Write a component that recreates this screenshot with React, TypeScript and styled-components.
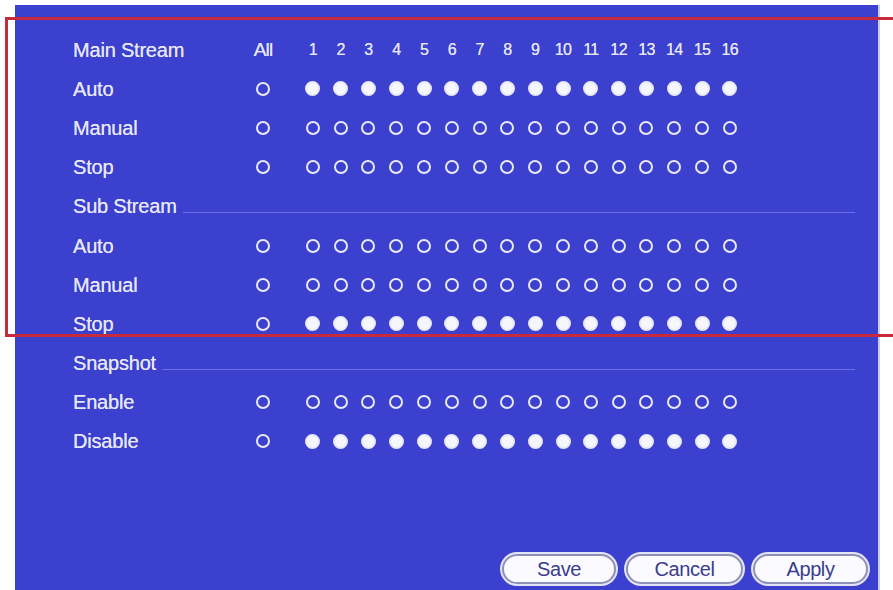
import React from 'react';
import styled, { createGlobalStyle } from 'styled-components';

const Global = createGlobalStyle`
  html,body{margin:0;padding:0;background:#fff}
  body{font-family:"Liberation Sans",Arial,sans-serif}
`;

const Frame = styled.div`position:relative;width:893px;height:590px;overflow:hidden;background:#fff`;
const Panel = styled.div`margin:5px 0 0 15px;width:865px;height:585px;box-sizing:border-box;background:#3b40cf;border-right:2px solid #c9cbf3;padding:25px 10px 6px 58px;display:flex;flex-direction:column;color:#e6e6f6`;
const Rows = styled.div`display:flex;flex-direction:column`;
const Row = styled.div`display:flex;align-items:center;height:39.2px`;
const Label = styled.div`width:176px;font-size:20px;line-height:1;letter-spacing:-0.2px;text-shadow:0 0 0.6px #e6e6f6`;
const AllCell = styled.div`width:28px;display:flex;justify-content:center;font-size:19px;letter-spacing:-0.8px;text-shadow:0 0 0.6px #e6e6f6`;
const Channels = styled.div`margin-left:22px;display:grid;grid-template-columns:repeat(16,27.8px)`;
const Num = styled.div`text-align:center;font-size:16px;letter-spacing:-0.6px;text-shadow:0 0 0.6px #e6e6f6`;
const Cell = styled.div`display:flex;justify-content:center;align-items:center`;
const Radio = styled.span<{ on?: boolean }>`display:block;box-sizing:border-box;width:${({ on }) => (on ? 15 : 14)}px;height:${({ on }) => (on ? 15 : 14)}px;border-radius:50%;border:2.2px solid #e9e9f8;background:${({ on }) => (on ? '#f6f6fd' : 'transparent')}`;
const Section = styled.div`display:flex;align-items:center;height:39.2px;padding-right:13px`;
const SectionTitle = styled.div`font-size:20px;letter-spacing:-0.2px;white-space:nowrap;text-shadow:0 0 0.6px #e6e6f6`;
const Divider = styled.div`flex:1;height:1px;margin:12px 0 0 6px;background:#6a6fe4`;
const Spacer = styled.div`flex:1`;
const Footer = styled.div`display:flex;justify-content:flex-end;gap:10px`;
const Button = styled.button<{ w: number }>`width:${({ w }) => w}px;height:30px;box-sizing:border-box;border-radius:15px;border:2px solid #8e90b8;box-shadow:0 0 0 2px #e4e4f6;background:#fbfbff;color:#3a3d8e;font-family:"Liberation Sans",Arial,sans-serif;font-size:20px;letter-spacing:-0.4px;padding:0;cursor:pointer`;
const Annotation = styled.div`position:absolute;left:5px;top:17px;width:910px;height:320px;box-sizing:border-box;border:3px solid #c62a3c;pointer-events:none`;

const CH = Array.from({ length: 16 }, (_, i) => i + 1);

function OptionRow({ label, on }: { label: string; on: boolean }) {
  return (
    <Row>
      <Label>{label}</Label>
      <AllCell><Radio /></AllCell>
      <Channels>{CH.map(c => <Cell key={c}><Radio on={on} /></Cell>)}</Channels>
    </Row>
  );
}

function Heading({ title }: { title: string }) {
  return (
    <Section>
      <SectionTitle>{title}</SectionTitle>
      <Divider />
    </Section>
  );
}

export default function App() {
  return (
    <Frame>
      <Global />
      <Panel>
        <Rows>
          <Row>
            <Label>Main Stream</Label>
            <AllCell>All</AllCell>
            <Channels>{CH.map(c => <Num key={c}>{c}</Num>)}</Channels>
          </Row>
          <OptionRow label="Auto" on />
          <OptionRow label="Manual" on={false} />
          <OptionRow label="Stop" on={false} />
          <Heading title="Sub Stream" />
          <OptionRow label="Auto" on={false} />
          <OptionRow label="Manual" on={false} />
          <OptionRow label="Stop" on />
          <Heading title="Snapshot" />
          <OptionRow label="Enable" on={false} />
          <OptionRow label="Disable" on />
        </Rows>
        <Spacer />
        <Footer>
          <Button w={114}>Save</Button>
          <Button w={117}>Cancel</Button>
          <Button w={115}>Apply</Button>
        </Footer>
      </Panel>
      <Annotation />
    </Frame>
  );
}
